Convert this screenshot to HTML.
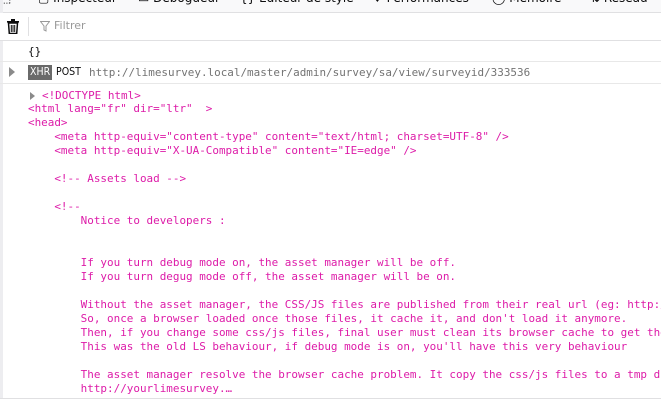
<!DOCTYPE html>
<html><head><style>
html,body{margin:0;padding:0;width:661px;height:403px;overflow:hidden;background:#fff;font-family:"DejaVu Sans","Liberation Sans",sans-serif;}
#wrap{position:absolute;left:0;top:0;width:661px;height:403px;overflow:hidden;}
.tb{position:absolute;left:0;top:0;width:661px;height:12px;background:#f9f9fa;border-bottom:1px solid #e0e0e2;overflow:hidden;}
.tb span{position:absolute;top:-9px;font-size:12px;color:#0c0c0d;white-space:nowrap;}
.fb{position:absolute;left:0;top:13px;width:661px;height:27px;border-bottom:1px solid #e0e0e2;background:#fff;}
.mono{font-family:"DejaVu Sans Mono","Liberation Mono",monospace;font-size:10.95px;white-space:pre;}
.row{position:absolute;left:0;width:661px;overflow:hidden;}
.ln{position:absolute;left:28px;color:#dd1ba8;line-height:14px;}
</style></head><body><div id="wrap">
<div class="tb">
<span style="left:0">⬚ </span>
<span style="left:38px">▢ Inspecteur</span>
<span style="left:138px">▭ Débogueur</span>
<span style="left:240px">{} Éditeur de style</span>
<span style="left:372px">♦ Performances</span>
<span style="left:492px">◯ Mémoire</span>
<span style="left:590px">⇅ Réseau</span>
</div>
<div style="position:absolute;left:0;top:0;width:3px;height:403px;background:#ededf0"></div>
<div class="fb">
<svg style="position:absolute;left:7px;top:6px" width="12" height="15" viewBox="0 0 12 15"><rect x="0" y="2" width="12" height="1.6" fill="#0c0c0d"/><rect x="4" y="0" width="4" height="2" fill="#0c0c0d"/><path d="M1.5 4h9l-.8 10.5h-7.4z" fill="none" stroke="#0c0c0d" stroke-width="1.5"/><path d="M4.3 6v7M6 6v7M7.7 6v7" stroke="#0c0c0d" stroke-width="1"/></svg>
<div style="position:absolute;left:28px;top:4px;width:1px;height:19px;background:#e0e0e2"></div>
<svg style="position:absolute;left:40px;top:8px" width="10" height="11" viewBox="0 0 10 11"><path d="M.5.5h9L6 5v5L4 9V5z" fill="none" stroke="#999" stroke-width="1"/></svg>
<span style="position:absolute;left:54px;top:6px;font-size:11px;color:#999">Filtrer</span>
</div>
<div class="row mono" style="top:41px;height:20px;border-bottom:1px solid #e8e8e8"><span style="position:absolute;left:28px;top:4px;color:#0c0c0d">{}</span></div>
<div class="row mono" style="top:62px;height:21px;border-bottom:1px solid #e8e8e8">
<svg style="position:absolute;left:9px;top:5px" width="7" height="10"><path d="M0 0L6 5 0 10z" fill="#8a8a8a"/></svg>
<span style="position:absolute;left:28px;top:3px;background:#6a6a6a;color:#fff;padding:1px 2px;line-height:13px;font-family:'DejaVu Sans Condensed','DejaVu Sans',sans-serif;font-size:10.5px">XHR</span>
<span style="position:absolute;left:56px;top:4px;color:#0c0c0d;font-family:'DejaVu Sans Condensed','DejaVu Sans',sans-serif;font-size:10.5px">POST</span>
<span style="position:absolute;left:89px;top:4px;color:#737373">http://limesurvey.local/master/admin/survey/sa/view/surveyid/333536</span>
</div>
<svg style="position:absolute;left:30px;top:92px" width="5" height="8"><path d="M0 0L5 4 0 8z" fill="#8a8a8a"/></svg>
<div class="ln mono" style="top:89px;left:42px">&lt;!DOCTYPE html&gt;</div>
<div class="ln mono" style="top:102px">&lt;html lang="fr" dir="ltr"  &gt;
&lt;head&gt;
    &lt;meta http-equiv="content-type" content="text/html; charset=UTF-8" /&gt;
    &lt;meta http-equiv="X-UA-Compatible" content="IE=edge" /&gt;

    &lt;!-- Assets load --&gt;

    &lt;!--
        Notice to developers :


        If you turn debug mode on, the asset manager will be off.
        If you turn degug mode off, the asset manager will be on.

        Without the asset manager, the CSS/JS files are published from their real url (eg: http://yourlimesurvey
        So, once a browser loaded once those files, it cache it, and don't load it anymore.
        Then, if you change some css/js files, final user must clean its browser cache to get the new version
        This was the old LS behaviour, if debug mode is on, you'll have this very behaviour

        The asset manager resolve the browser cache problem. It copy the css/js files to a tmp directory
        http://yourlimesurvey.…</div>
<div style="position:absolute;left:0;top:398px;width:661px;height:5px;background:#fff;border-top:1px solid #e0e0e2"></div>
</div></body></html>
